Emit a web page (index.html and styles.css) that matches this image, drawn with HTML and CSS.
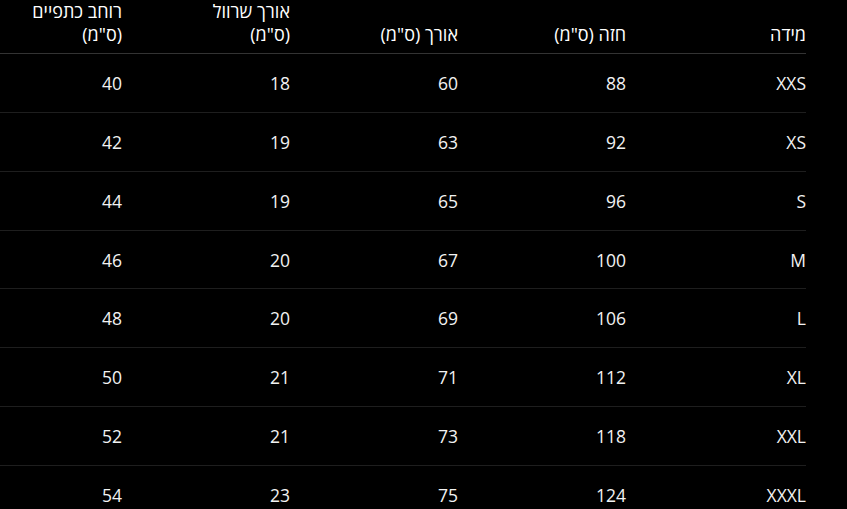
FILE: index.html
```html
<!DOCTYPE html>
<html lang="he" dir="rtl">
<head>
<meta charset="utf-8">
<title>טבלת מידות</title>
<link rel="stylesheet" href="styles.css">
</head>
<body>
<div class="scroll">
  <table class="sizes">
    <thead>
      <tr>
        <th>מידה</th>
        <th>חזה (ס"מ)</th>
        <th>אורך (ס"מ)</th>
        <th>אורך שרוול<br>(ס"מ)</th>
        <th>רוחב כתפיים<br>(ס"מ)</th>
      </tr>
    </thead>
    <tbody>
      <tr><td>XXS</td><td>88</td><td>60</td><td>18</td><td>40</td></tr>
      <tr><td>XS</td><td>92</td><td>63</td><td>19</td><td>42</td></tr>
      <tr><td>S</td><td>96</td><td>65</td><td>19</td><td>44</td></tr>
      <tr><td>M</td><td>100</td><td>67</td><td>20</td><td>46</td></tr>
      <tr><td>L</td><td>106</td><td>69</td><td>20</td><td>48</td></tr>
      <tr><td>XL</td><td>112</td><td>71</td><td>21</td><td>50</td></tr>
      <tr><td>XXL</td><td>118</td><td>73</td><td>21</td><td>52</td></tr>
      <tr><td>XXXL</td><td>124</td><td>75</td><td>23</td><td>54</td></tr>
    </tbody>
  </table>
</div>
</body>
</html>
```
FILE: styles.css
```css
html, body {
  margin: 0;
  padding: 0;
  background: #000;
}
body {
  font-family: "Open Sans", "DejaVu Sans", sans-serif;
  color: #f2f2f2;
  direction: rtl;
  height: 509px;
  overflow: hidden;
}
.scroll {
  direction: rtl;
  overflow: hidden;
  padding-right: 41px;
}
.sizes {
  direction: rtl;
  border-collapse: separate;
  border-spacing: 0;
  table-layout: fixed;
  width: 840px;
  min-width: 840px;
  font-size: 17.5px;
}
.sizes th,
.sizes td {
  width: 168px;
  text-align: right;
  padding: 0 12px;
  box-sizing: border-box;
}
.sizes th:first-child,
.sizes td:first-child {
  padding-right: 0;
}
.sizes th {
  height: 52px;
  vertical-align: bottom;
  font-weight: 500;
  font-size: 18px;
  line-height: 23px;
  color: #fff;
  padding-bottom: 7px;
  border-bottom: 1px solid #333;
}
.sizes td {
  height: 58.86px;
  vertical-align: middle;
  font-weight: 400;
  line-height: 22px;
  border-bottom: 1px solid #1e1e1e;
}
```
